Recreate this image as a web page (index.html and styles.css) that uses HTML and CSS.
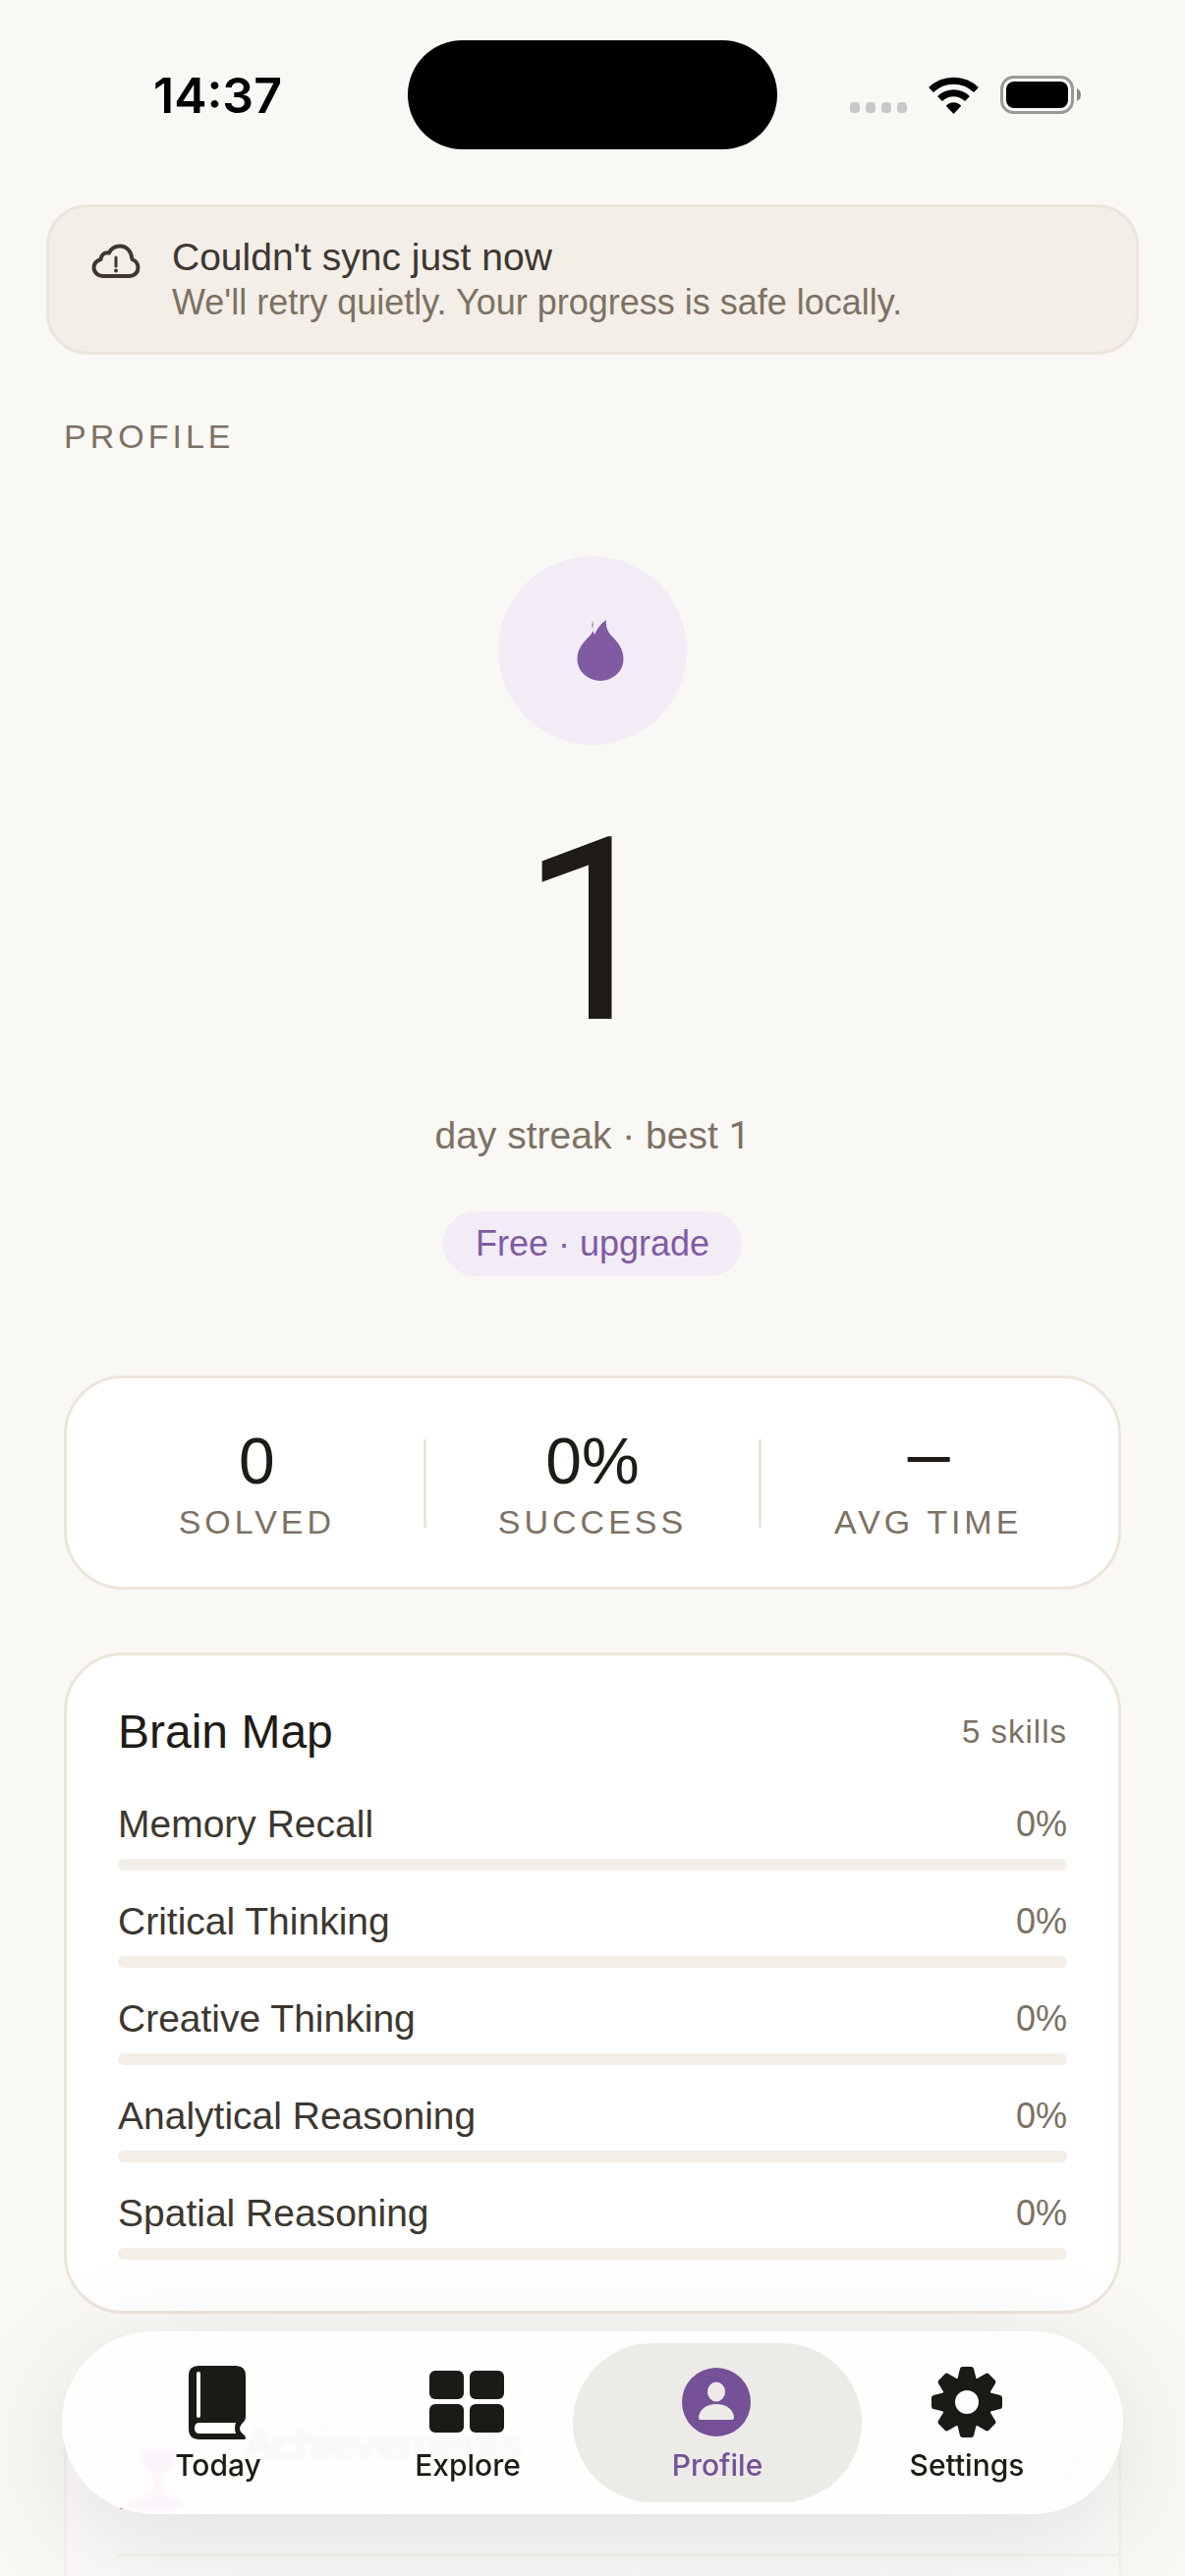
FILE: index.html
```html
<!DOCTYPE html>
<html lang="en">
<head>
  <meta charset="UTF-8">
  <meta name="viewport" content="width=device-width, initial-scale=1.0">
  <title>Profile</title>
  <link rel="stylesheet" href="styles.css">
</head>
<body>
  <div class="screen">
    <!-- Status Bar -->
    <header class="status-bar">
      <span class="time">14:37</span>
      <span class="island"></span>
      <div class="status-icons">
        <svg class="signal" width="58" height="12" viewBox="0 0 58 12" fill="#c8c8c6">
          <rect x="0" y="0" width="10" height="11" rx="4"/>
          <rect x="16" y="0" width="10" height="11" rx="4"/>
          <rect x="32" y="0" width="10" height="11" rx="4"/>
          <rect x="48" y="0" width="10" height="11" rx="4"/>
        </svg>
        <svg class="wifi" width="51" height="38" viewBox="0 0 51 38">
          <g fill="none" stroke="#000" stroke-width="7">
            <path d="M2.5 13.5a33 33 0 0 1 46 0"/>
            <path d="M11.500 22.500a20 20 0 0 1 28 0"/>
          </g>
          <path d="M25.500 38l-7.500-8q0-1 1-1.600a11 11 0 0 1 13 0q1 .6 1 1.600z"/>
        </svg>
        <svg class="battery" width="82" height="39" viewBox="0 0 82 39">
          <rect x="1.500" y="1.500" width="72" height="36" rx="12" fill="none" stroke="#999997" stroke-width="3"/>
          <rect x="6" y="6" width="63" height="27" rx="8"/>
          <path d="M78 13q4 2 4 6.500t-4 6.500z" fill="#888"/>
        </svg>
      </div>
    </header>

    <!-- Sync Banner -->
    <div class="banner" role="status">
      <svg class="banner-icon" width="50" height="36" viewBox="0 0 50 36" fill="none" stroke="#3d3730" stroke-width="4" stroke-linecap="round" stroke-linejoin="round">
        <path d="M12 33h27a8.500 8.500 0 0 0 8.500-8.500c0-4-2-7-6-8.500C41 8 36 2.500 29 2.500c-5 0-9 2.500-11 7-5-1-8 2-8.500 6.500-4.500 1.500-7 4.500-7 8.500A9 9 0 0 0 12 33z"/>
        <path d="M25 14v9" stroke-width="3"/>
        <circle cx="25" cy="27.500" r="2" fill="#3d3730" stroke="none"/>
      </svg>
      <div>
        <p class="banner-title">Couldn't sync just now</p>
        <p class="banner-text">We'll retry quietly. Your progress is safe locally.</p>
      </div>
    </div>

    <main class="content">
      <h1 class="page-title">PROFILE</h1>

      <!-- Streak Section -->
      <section class="streak">
        <div class="streak-badge">
          <svg width="48" height="63" viewBox="0 0 48 63" fill="#805ba2">
            <path d="M30 0c-1 9 3 14 8 19 6 6 9.500 13 9.500 21A23.500 22 0 0 1 .5 40c0-8 3.500-14 9-20 3-3 6-6 7-9l1.500 4C21 8 25 3 30 0z"/>
            <path d="M16 1q1.500 4 0 8-1-4 0-8z"/>
          </svg>
        </div>
        <p class="streak-count">1</p>
        <p class="streak-label">day streak · best <span class="digit">1</span></p>
        <a class="plan" href="#upgrade">Free · upgrade</a>
      </section>

      <!-- Stats Section -->
      <section class="card stats">
        <div class="stat">
          <span class="stat-value">0</span>
          <span class="stat-label">SOLVED</span>
        </div>
        <div class="stat">
          <span class="stat-value">0%</span>
          <span class="stat-label">SUCCESS</span>
        </div>
        <div class="stat">
          <span class="stat-value empty">—</span>
          <span class="stat-label">AVG TIME</span>
        </div>
      </section>

      <!-- Brain Map Section -->
      <section class="card brain-map">
        <div class="card-head">
          <h2>Brain Map</h2>
          <span class="skill-count">5 skills</span>
        </div>
        <ul class="skills">
          <li>
            <div class="skill-row"><span>Memory Recall</span><span class="percent">0%</span></div>
            <div class="track"><div class="fill" style="width: 0%"></div></div>
          </li>
          <li>
            <div class="skill-row"><span>Critical Thinking</span><span class="percent">0%</span></div>
            <div class="track"><div class="fill" style="width: 0%"></div></div>
          </li>
          <li>
            <div class="skill-row"><span>Creative Thinking</span><span class="percent">0%</span></div>
            <div class="track"><div class="fill" style="width: 0%"></div></div>
          </li>
          <li>
            <div class="skill-row"><span>Analytical Reasoning</span><span class="percent">0%</span></div>
            <div class="track"><div class="fill" style="width: 0%"></div></div>
          </li>
          <li>
            <div class="skill-row"><span>Spatial Reasoning</span><span class="percent">0%</span></div>
            <div class="track"><div class="fill" style="width: 0%"></div></div>
          </li>
        </ul>
      </section>

      <section class="card links">
        <a class="link-row" href="#achievements">
          <svg class="trophy" width="84" height="100" viewBox="0 0 84 100" fill="#b23cff">
            <path d="M24 34h36q0 22-14 26v22h12l10 14H2q4-8 34-14V60Q24 56 24 34z"/>
          </svg>
          <span class="link-title">Achievements</span>
          <svg class="chevron" width="24" height="44" viewBox="0 0 24 44" fill="none" stroke="#c9bfb2" stroke-width="5">
            <path d="M3 3l17 19L3 41"/>
          </svg>
        </a>
      </section>
    </main>

    <!-- Tab Bar -->
    <nav class="tab-bar">
      <a class="tab" href="#today">
        <svg width="80" height="76" viewBox="0 0 80 76">
          <path fill="#1c1a17" fill-rule="evenodd" d="M20 1h38q10 0 10 10v42q0 3-2 5-4 4-4 7 0 3 4 6 2 1.500 2 3.500 0 1.500-2 1.500H21Q10 76 10 65V11Q10 1 20 1zM21 59q-5 0-5 5.500t5 5.500h37q-2-5.500 0-11z"/>
          <path d="M20 9v43" stroke="#fff" stroke-width="4" stroke-linecap="round"/>
        </svg>
        <span>Today</span>
      </a>
      <a class="tab" href="#explore">
        <svg width="80" height="76" viewBox="0 0 80 76" fill="#1c1a17">
          <rect x="1" y="6" width="35" height="29" rx="6"/>
          <rect x="42" y="6" width="35" height="29" rx="6"/>
          <rect x="1" y="40" width="35" height="29" rx="6"/>
          <rect x="42" y="40" width="35" height="29" rx="6"/>
        </svg>
        <span>Explore</span>
      </a>
      <a class="tab active" href="#profile" aria-current="page">
        <svg width="80" height="76" viewBox="0 0 80 76">
          <circle cx="39" cy="38" r="35" fill="#755197"/>
          <ellipse cx="39" cy="27.500" rx="9" ry="10" fill="#ecebe8"/>
          <path d="M21 54c0-8 8-14 18-14s18 6 18 14q0 2-2 2H23q-2 0-2-2z" fill="#ecebe8"/>
        </svg>
        <span>Profile</span>
      </a>
      <a class="tab" href="#settings">
        <svg width="80" height="76" viewBox="-40 -38 80 76">
          <g fill="#1c1a17">
            <circle r="26"/>
            <g id="teeth">
              <path id="tooth" d="M-10-22l3-12q.5-2 2.500-2h9q2 0 2.500 2l3 12z"/>
              <use href="#tooth" transform="rotate(45)"/>
              <use href="#tooth" transform="rotate(90)"/>
              <use href="#tooth" transform="rotate(135)"/>
            </g>
            <use href="#teeth" transform="rotate(180)"/>
          </g>
          <circle r="12" fill="#fefdfb"/>
        </svg>
        <span>Settings</span>
      </a>
    </nav>
  </div>
</body>
</html>
```

FILE: styles.css
```css
/* Global Styles */
* {
  box-sizing: border-box;
}

body {
  font-family: "Liberation Sans", Arial, sans-serif;
  background: #f9f8f4;
  color: #1f1c17;
  margin: 0;
}

h1, h2, p, ul {
  margin: 0;
  padding: 0;
  font-weight: normal;
}

a {
  color: inherit;
  text-decoration: none;
}

.screen {
  position: relative;
  height: 100vh;
  overflow: hidden;
}

/* Status Bar */
.status-bar {
  display: grid;
  grid-template-columns: 1fr 376px 1fr;
  align-items: center;
  padding-top: 41px;
}

.time {
  font-family: Inter, sans-serif;
  font-size: 50px;
  font-weight: 600;
  line-height: 60px;
  color: #000;
  padding-left: 28px;
  text-align: center;
}

.island {
  height: 111px;
  border-radius: 56px;
  background: #000;
}

.status-icons {
  display: flex;
  align-items: flex-end;
  gap: 22px;
  padding-left: 74px;
}

/* Sync Banner */
.banner {
  display: flex;
  gap: 32px;
  margin: 56px 47px 0;
  padding: 28px 43px 27px;
  background: #f3eee7;
  border: 3px solid #ede5d9;
  border-radius: 42px;
}

.banner-icon {
  margin-top: 9px;
}

.banner-title {
  font-size: 39px;
  line-height: 46px;
  color: #3d3730;
}

.banner-text {
  font-size: 36px;
  line-height: 46px;
  color: #7d7163;
}

/* Page Content */
.content {
  margin: 63px 65px 0;
}

.page-title {
  font-size: 34px;
  line-height: 40px;
  letter-spacing: 4px;
  color: #7d7163;
}

/* Streak Section */
.streak {
  display: flex;
  flex-direction: column;
  align-items: center;
  margin-top: 102px;
}

.streak-badge {
  display: flex;
  align-items: center;
  justify-content: center;
  width: 192px;
  height: 192px;
  padding-left: 16px;
  border-radius: 50%;
  background: #f2ecf7;
}

.streak-count {
  font-family: Roboto, sans-serif;
  font-size: 260px;
  line-height: 260px;
  margin-top: 60px;
}

.streak-label {
  font-size: 39px;
  line-height: 46px;
  color: #7d7163;
  margin-top: 55px;
}

.digit {
  font-family: Roboto, sans-serif;
}

.plan {
  font-size: 36px;
  line-height: 66px;
  color: #805ba2;
  background: #f2ecf7;
  border-radius: 33px;
  padding: 0 33px;
  margin-top: 54px;
}

/* Cards */
.card {
  background: #fff;
  border: 3px solid #ede5d9;
  border-radius: 60px;
}

.stats {
  display: flex;
  align-items: center;
  margin-top: 101px;
  padding: 48px 21px 46px 24px;
}

.stat {
  flex: 1;
  display: grid;
  grid-template-columns: 1fr 3px;
  justify-items: center;
  row-gap: 6px;
}

/* divider between the columns */
.stat::after {
  content: "";
  grid-column: 2;
  grid-row: 1 / 3;
  align-self: center;
  width: 3px;
  height: 90px;
  background: #ede5d9;
}

.stat:last-child::after {
  background: none;
}

.stat-value {
  font-size: 66px;
  line-height: 72px;
}

.stat-value.empty {
  font-family: Roboto, sans-serif;
}

.stat-label {
  font-size: 34px;
  line-height: 40px;
  letter-spacing: 4px;
  color: #7d7163;
}

/* Brain Map */
.brain-map {
  margin-top: 64px;
  padding: 48px 52px 52px;
}

.card-head {
  display: flex;
  align-items: center;
  justify-content: space-between;
}

.card-head h2 {
  font-size: 48px;
  line-height: 60px;
}

.skill-count {
  font-size: 33px;
  line-height: 60px;
  letter-spacing: 1px;
  color: #7d7163;
}

.skills {
  list-style: none;
  display: flex;
  flex-direction: column;
  gap: 29px;
  margin-top: 41px;
}

.skill-row {
  display: flex;
  justify-content: space-between;
  font-size: 39px;
  line-height: 46px;
  color: #3d3730;
}

.percent {
  font-size: 36px;
  color: #7d7163;
}

.track {
  height: 12px;
  margin-top: 12px;
  border-radius: 6px;
  background: #f3eee7;
}

.fill {
  height: 100%;
  border-radius: 6px;
  background: #805ba2;
}

/* Links */
.links {
  margin-top: 64px;
  height: 400px;
  background: #fbfaf8;
  border-color: #f5f2ec;
}

.link-row {
  display: flex;
  align-items: flex-start;
  gap: 44px;
  height: 180px;
  margin-left: 52px;
  padding: 36px 36px 0 0;
  border-bottom: 3px solid #f5f2ec;
}

.link-title {
  flex: 1;
  font-size: 45px;
  line-height: 60px;
}

.chevron {
  margin-top: 30px;
}

/* Tab Bar */
.tab-bar {
  position: absolute;
  left: 63px;
  right: 63px;
  bottom: 63px;
  display: grid;
  grid-template-columns: repeat(4, 1fr);
  padding: 12px 32px;
  border-radius: 93px;
  background: rgba(255, 254, 252, 0.95);
  backdrop-filter: blur(3px);
  box-shadow: 0 24px 120px rgba(0, 0, 0, 0.11);
}

.tab {
  display: flex;
  flex-direction: column;
  align-items: center;
  gap: 6px;
  height: 162px;
  margin: 0 -20px;
  padding-top: 22px;
  border-radius: 81px;
  font-family: Inter, sans-serif;
  font-size: 30px;
  font-weight: 500;
  line-height: 40px;
}

.tab.active {
  background: #ecebe8;
  color: #755197;
}
```
